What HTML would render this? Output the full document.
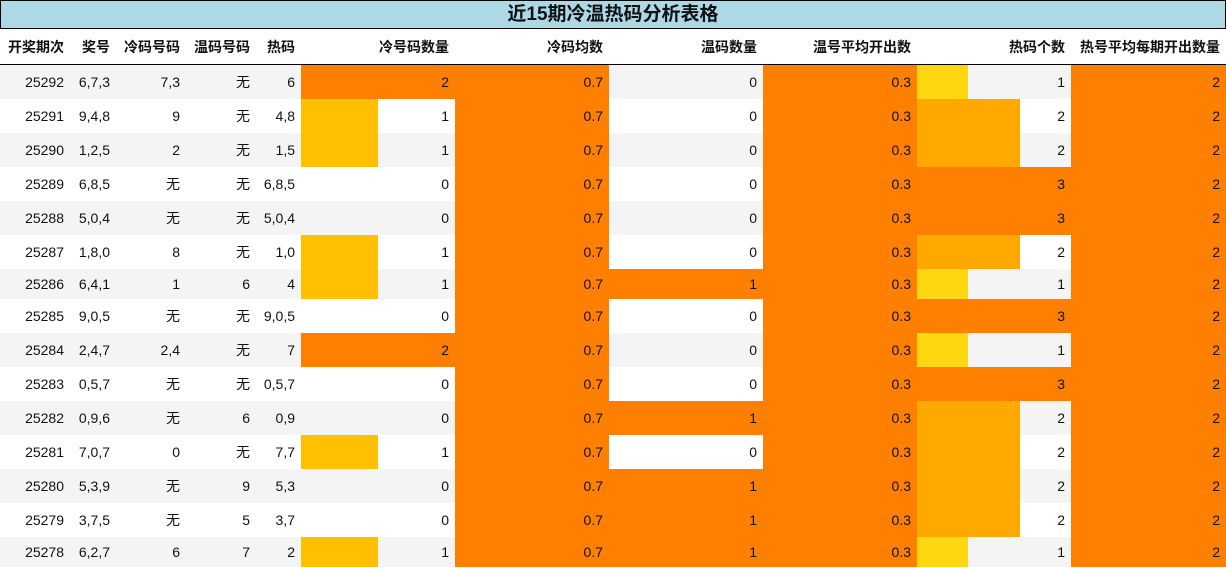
<!DOCTYPE html><html><head><meta charset="utf-8"><style>
body{margin:0;width:1226px;height:568px;overflow:hidden;background:#fff;font-family:"Liberation Sans","Noto Sans CJK SC",sans-serif;font-size:14px;color:#111}
.title{position:absolute;left:0;top:0;width:1224px;height:27px;background:#add8e6;border:1px solid #000;text-align:center;font-weight:bold;font-size:19px;line-height:28px}
table{position:absolute;left:0;top:29px;border-collapse:collapse;table-layout:fixed;width:1226px}
th{height:35px;font-weight:bold;text-align:right;padding:0 6px;border-bottom:1px solid #000;font-size:14px;white-space:nowrap}
td{text-align:right;padding:0 6px;white-space:nowrap;position:relative}
tr.g td{background:#f4f4f4}
tr.h td{height:34px}tr.s td{height:30px}
td.o,tr.g td.o{background:#ff8000}
.b{position:absolute;left:0;top:0;bottom:0}
td span{position:relative}
</style></head><body>
<div class="title">近15期冷温热码分析表格</div>
<table>
<colgroup><col style="width:70px"><col style="width:46px"><col style="width:70px"><col style="width:70px"><col style="width:45px"><col style="width:154px"><col style="width:154px"><col style="width:154px"><col style="width:154px"><col style="width:154px"><col style="width:155px"></colgroup>
<tr><th>开奖期次</th><th>奖号</th><th>冷码号码</th><th>温码号码</th><th>热码</th><th>冷号码数量</th><th>冷码均数</th><th>温码数量</th><th>温号平均开出数</th><th>热码个数</th><th>热号平均每期开出数量</th></tr>
<tbody id="b"></tbody></table>
<script>
var d=[["25292","6,7,3","7,3","无","6",2,0,1],["25291","9,4,8","9","无","4,8",1,0,2],["25290","1,2,5","2","无","1,5",1,0,2],["25289","6,8,5","无","无","6,8,5",0,0,3],["25288","5,0,4","无","无","5,0,4",0,0,3],["25287","1,8,0","8","无","1,0",1,0,2],["25286","6,4,1","1","6","4",1,1,1],["25285","9,0,5","无","无","9,0,5",0,0,3],["25284","2,4,7","2,4","无","7",2,0,1],["25283","0,5,7","无","无","0,5,7",0,0,3],["25282","0,9,6","无","6","0,9",0,1,2],["25281","7,0,7","0","无","7,7",1,0,2],["25280","5,3,9","无","9","5,3",0,1,2],["25279","3,7,5","无","5","3,7",0,1,2],["25278","6,2,7","6","7","2",1,1,1]];
var h="";d.forEach(function(r,i){var cls=(i%2==0?"g ":"")+((r[2]=="无"||r[3]=="无")?"h":"s");
h+='<tr class="'+cls+'"><td>'+r[0]+'</td><td>'+r[1]+'</td><td>'+r[2]+'</td><td>'+r[3]+'</td><td>'+r[4]+'</td>';
if(r[5]==2)h+='<td class="o">2</td>';else if(r[5]==1)h+='<td><div class="b" style="width:77px;background:#ffc000"></div><span>1</span></td>';else h+='<td>0</td>';
h+='<td class="o">0.7</td>';
h+=r[6]?'<td class="o">1</td>':'<td>0</td>';
h+='<td class="o">0.3</td>';
if(r[7]==3)h+='<td class="o">3</td>';else if(r[7]==2)h+='<td><div class="b" style="width:103px;background:#ffa800"></div><span>2</span></td>';else h+='<td><div class="b" style="width:51px;background:#ffd710"></div><span>1</span></td>';
h+='<td class="o">2</td></tr>';});
document.getElementById("b").innerHTML=h;
</script></body></html>
